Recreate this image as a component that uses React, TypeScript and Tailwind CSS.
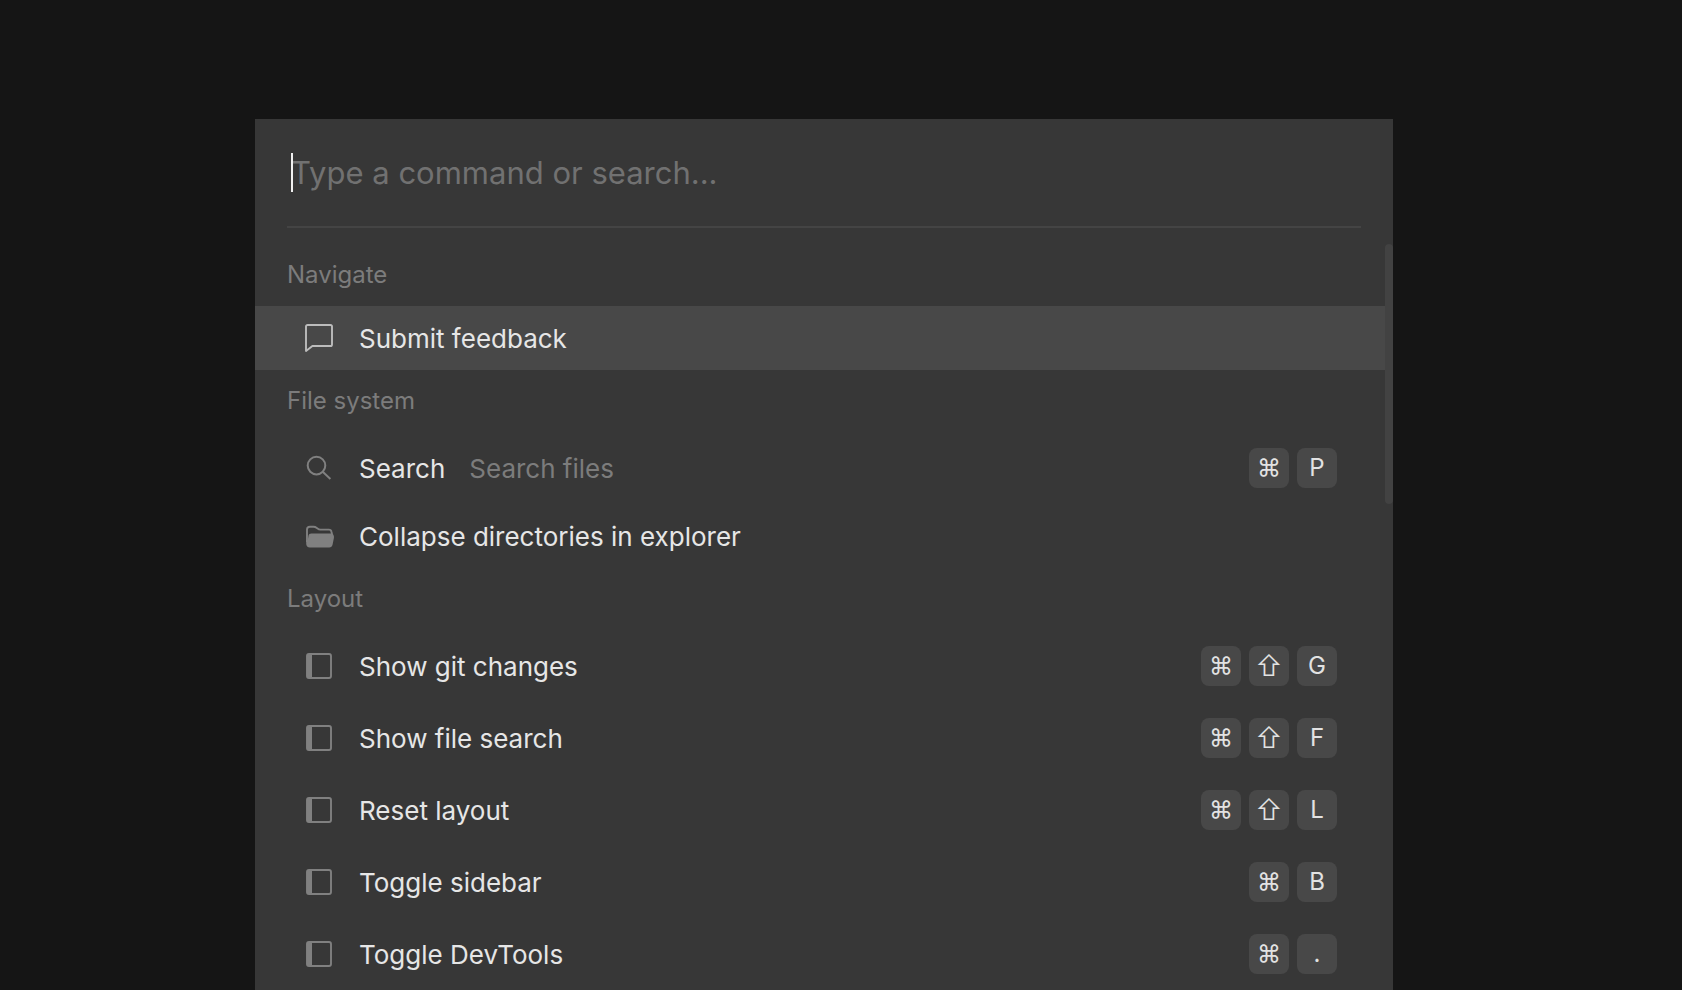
import React from "react";

type Item = {
  label: string;
  hint?: string;
  keys?: string[];
  icon: React.ReactNode;
  active?: boolean;
};

type Group = { title: string; items: Item[] };

const ChatIcon = () => (
  <svg viewBox="0 0 32 32" fill="none" stroke="currentColor" strokeWidth="1.9" strokeLinejoin="round" className="size-8 shrink-0" aria-hidden="true">
    <path d="M3 28.4V4.600a1.600 1.600 0 0 1 1.600-1.600h22.800A1.600 1.600 0 0 1 29 4.600v17.800a1.600 1.600 0 0 1-1.600 1.600H9.400L3 29z" />
  </svg>
);

const SearchIcon = () => (
  <svg viewBox="0 0 32 32" fill="none" stroke="currentColor" strokeWidth="2" className="size-8 shrink-0" aria-hidden="true">
    <circle cx="13.500" cy="13.600" r="8.800" />
    <path d="M20 20l7.400 7" />
  </svg>
);

const FolderIcon = () => (
  <svg viewBox="0 0 32 32" fill="none" className="size-8 shrink-0" aria-hidden="true">
    <path
      d="M4 22V9.500A2.800 2.800 0 0 1 6.800 6.800h3.700c1.300 0 2.200.300 3.300 1.100 1.200.900 2.300 1.700 3.700 1.700h8.300c1.500 0 2.500 1 2.700 2.300l.700 3.300"
      stroke="currentColor"
      strokeWidth="1.900"
    />
    <path
      d="M8.300 13.600h19.900c1.600 0 3.200 2.200 2.700 4.300l-1.300 6.700c-.400 1.800-1.600 2.900-3.400 2.900H7c-2.400 0-3.800-1.400-3.800-3.800V20h1.600l.700-4.200c.300-1.400 1.300-2.200 2.800-2.200z"
      fill="currentColor"
    />
  </svg>
);

const PanelIcon = () => (
  <svg viewBox="0 0 32 32" fill="none" className="size-8 shrink-0" aria-hidden="true">
    <rect x="4" y="4" width="24" height="24" rx="2" stroke="currentColor" strokeWidth="1.900" />
    <path d="M4 4h5v24H4z" fill="currentColor" />
  </svg>
);

const groups: Group[] = [
  {
    title: "Navigate",
    items: [{ label: "Submit feedback", icon: <ChatIcon />, active: true }],
  },
  {
    title: "File system",
    items: [
      { label: "Search", hint: "Search files", keys: ["⌘", "P"], icon: <SearchIcon /> },
      { label: "Collapse directories in explorer", icon: <FolderIcon /> },
    ],
  },
  {
    title: "Layout",
    items: [
      { label: "Show git changes", keys: ["⌘", "⇧", "G"], icon: <PanelIcon /> },
      { label: "Show file search", keys: ["⌘", "⇧", "F"], icon: <PanelIcon /> },
      { label: "Reset layout", keys: ["⌘", "⇧", "L"], icon: <PanelIcon /> },
      { label: "Toggle sidebar", keys: ["⌘", "B"], icon: <PanelIcon /> },
      { label: "Toggle DevTools", keys: ["⌘", "."], icon: <PanelIcon /> },
    ],
  },
];

function CommandRow({ item }: { item: Item }) {
  return (
    <li>
      <button
        type="button"
        className={`flex min-h-16 w-full items-center gap-6 px-12 text-left ${item.keys ? "py-4" : ""} ${
          item.active ? "bg-[#484848] text-[#bcbcbc]" : "text-[#808080]"
        }`}
      >
        {item.icon}
        <span className="pt-0.5 text-[26px] leading-8 text-[#e6e6e6]">{item.label}</span>
        {item.hint && <span className="pt-0.5 text-[26px] leading-8 text-[#7c7c7c]">{item.hint}</span>}
        {item.keys && (
          <span className="ml-auto flex gap-2">
            {item.keys.map((key) => (
              <kbd
                key={key}
                className={`flex size-10 items-center justify-center rounded-lg bg-[#484848] font-['Inter',sans-serif] text-[#e2e2e2] ${
                  key === "⇧" ? "text-[28px] font-light" : "text-2xl"
                }`}
              >
                {key}
              </kbd>
            ))}
          </span>
        )}
      </button>
    </li>
  );
}

export default function App() {
  return (
    <main className="flex h-screen flex-col overflow-hidden bg-[#151515] pt-[119px] pr-[289px] pl-[255px] font-['Inter',sans-serif] font-[370]">
      <section className="flex min-h-0 w-full flex-1 flex-col bg-[#373737]" aria-label="Command palette">
        <div className="mx-8 border-b-2 border-[#444444] px-1 pt-[34px] pb-[33px]">
          <div className="relative">
            <input
              type="text"
              aria-label="Type a command or search"
              placeholder="Type a command or search..."
              className="block h-10 w-full bg-transparent text-[31px] leading-10 text-[#e6e6e6] caret-transparent outline-none placeholder:text-[#717171]"
            />
            <span className="absolute top-0 left-0 h-[39px] w-0.5 bg-[#f0f0f0]" />
          </div>
        </div>
        <div className="relative mt-4 min-h-0 flex-1">
          <div className="mr-2 h-full overflow-hidden">
            {groups.map((group) => (
              <section key={group.title}>
                <h2 className="px-8 py-[15px] text-2xl font-[370] text-[#7c7c7c]">{group.title}</h2>
                <ul>
                  {group.items.map((item) => (
                    <CommandRow key={item.label} item={item} />
                  ))}
                </ul>
              </section>
            ))}
          </div>
          <div className="absolute top-0 right-0 h-[260px] w-2 rounded bg-[#424242]" />
        </div>
      </section>
    </main>
  );
}
